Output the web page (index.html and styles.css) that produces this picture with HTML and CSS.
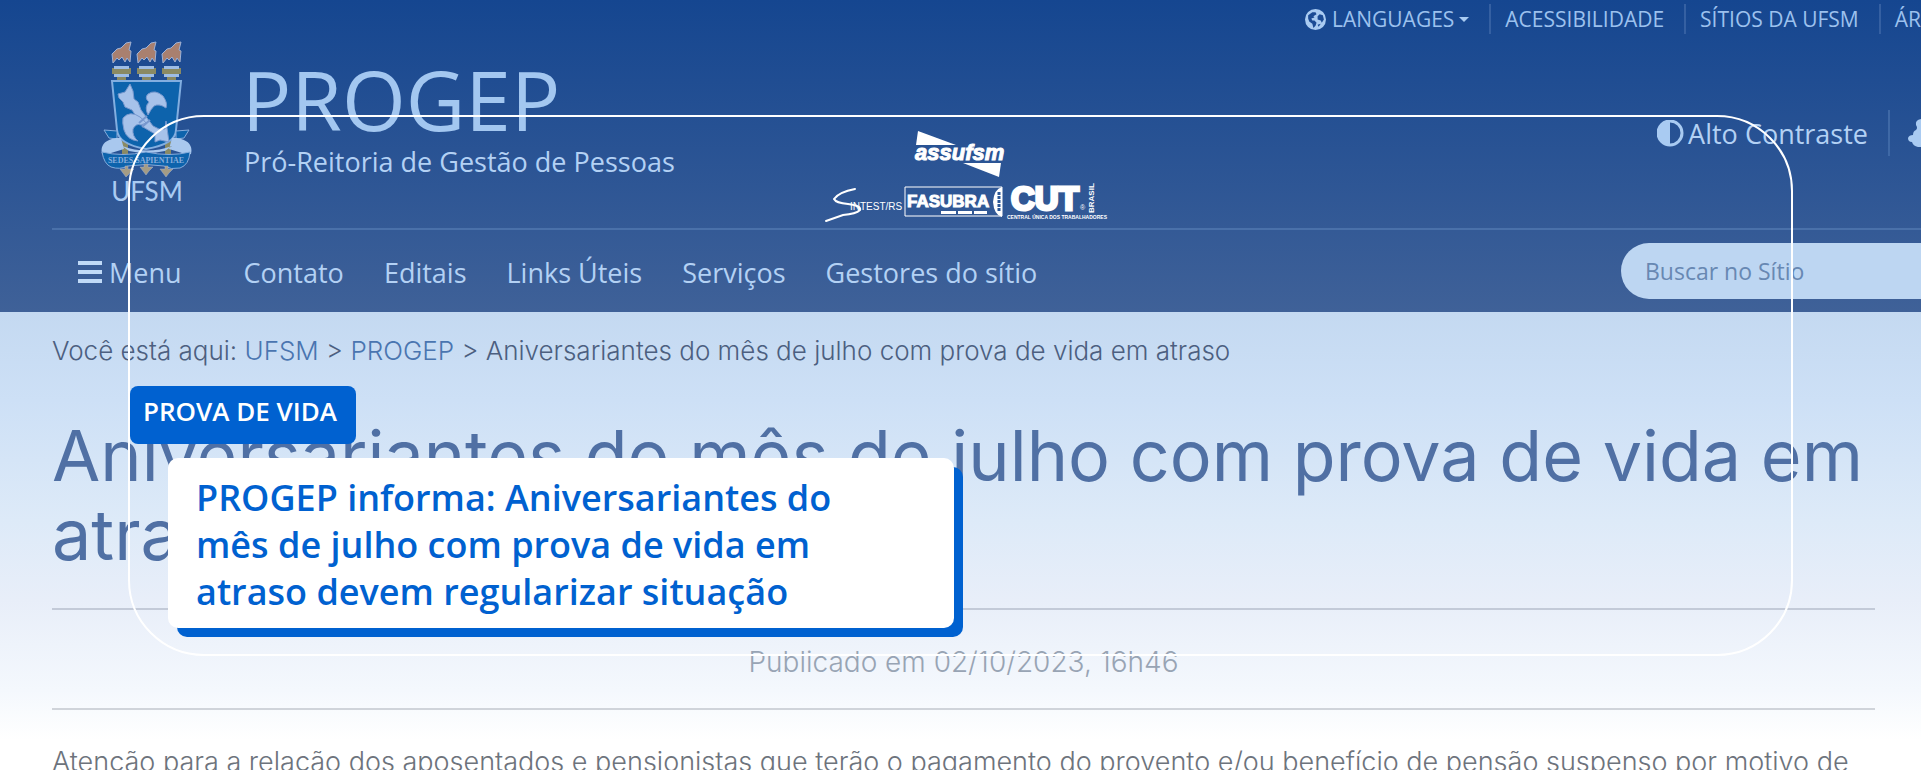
FILE: index.html
```html
<!DOCTYPE html>
<html lang="pt-BR">
<head>
<meta charset="utf-8">
<title>PROGEP – Prova de vida</title>
<link rel="stylesheet" href="styles.css">
</head>
<body>
<div class="page">
  <header class="header">
    <nav class="topbar" aria-label="Institucional">
      <button class="topbar-item languages" type="button">
        <svg class="globe" viewBox="0 0 20 20" aria-hidden="true"><circle cx="10" cy="10" r="10" fill="#a9cbf2"/><path fill="#1b4b95" d="M3 6l4-3 3 0 1 2-3 2 1 1-3 1 1 2 2 0 2 2-1 3-2 2-1-4-3-2-1-3zM14 5l3 1 1 4-2 3-1-2-3-1 0-3zM12 15l3-1-2 3z"/></svg>
        LANGUAGES <span class="caret"></span>
      </button>
      <a class="topbar-item" href="#">ACESSIBILIDADE</a>
      <a class="topbar-item" href="#">SÍTIOS DA UFSM</a>
      <a class="topbar-item topbar-last" href="#">ÁR</a>
    </nav>

    <div class="brand">
      <svg class="crest" viewBox="0 0 92 166" role="img" aria-label="UFSM">
        <g fill="#a9806f" stroke="#9fb2d6">
          <path d="M13 23l-1-9 5-5 4-1 5-5 5-1-2 8 2 1-1 11-3-4-2 4-3-5-3 3-2-2z"/>
          <path d="M38 23l-1-9 5-5 4-1 5-5 5-1-2 8 2 1-1 11-3-4-2 4-3-5-3 3-2-2z"/>
          <path d="M63 23l-1-9 5-5 4-1 5-5 5-1-2 8 2 1-1 11-3-4-2 4-3-5-3 3-2-2z"/>
        </g>
        <path fill="#8a8a63" d="M12 28h19v6h-5v7h-9v-7h-5zM37 28h19v6h-5v7h-9v-7h-5zM62 28h19v6h-5v7h-9v-7h-5zM22 100h6v14h-6zM65 100h6v14h-6z"/>
        <path fill="#9ebde5" d="M14 26h15v3H14zM39 26h15v3H39zM64 26h15v3H64zM14 34h15v3H14zM39 34h15v3H39zM64 34h15v3H64z"/>
        <path fill="#0d63ac" stroke="#82aee0" stroke-width="2" d="M12 41h69l-5 49q0 14-30 19Q18 104 17 90z"/>
        <g fill="#a7c2ea" stroke="#7898ce">
          <path d="M18 54l7-2 5-8 3 7 1 8 4 3 3 8 12 16 6 3 6 0 1-8 2 14 1 7-9-2-5 2 0-8-12-7-11-17-7-3-2-5-4-4z"/>
          <path d="M48 75q-4-8 1-13-5-4-1-8 7-5 15 2 5 7 3 12-7-5-12-2-3 3-6 9z"/>
          <path d="M41 85q-5-2-8 4-1 7 5 12-11-1-14-11-2-8-1-12 7-8 17-1 4 3 6 6z"/>
          <path fill="none" stroke-width="2" d="M39 83l8-7M42 87l8-7"/>
        </g>
        <path fill="#0d63ac" stroke="#86acdc" d="M4 90l13 1v8l-8-1zM89 90l-13 1v8l8-1z"/>
        <path fill="#a9c8ee" d="M2 114q-3-13 14-16h5l3 11-13 4-5 2zM91 114q3-13-14-16h-5l-3 11 13 4 5 2zM22 106q25 9 50 0l-7 5q-18 4-36 0z"/>
        <path fill="#0d63ac" stroke="#86acdc" d="M2 112q20 5 44 0 24 5 44 0-1 13-10 16-9 2-16-2-18-3-36 0-8 4-17 1Q4 124 2 112z"/>
        <text class="motto" x="46" y="123" text-anchor="middle">SEDES SAPIENTIAE</text>
        <path fill="#a49c85" stroke="#9fb2d6" stroke-width=".5" d="M20 129h5v-3h3v3h6l-4 4-4 4-3-4zM40 127h4v-3h4v3h5l-4 4-3 4-3-4zM60 129h5v-3h3v3h5l-4 4-3 4-3-4z"/>
        <text class="ufsm" x="47" y="161" text-anchor="middle">UFSM</text>
      </svg>
      <div class="brand-text">
        <a class="brand-name" href="#">PROGEP</a>
        <p class="brand-sub">Pró-Reitoria de Gestão de Pessoas</p>
      </div>
      <div class="tools">
        <button class="contrast" type="button">
          <svg class="contrast-icon" viewBox="0 0 27 27" aria-hidden="true"><circle cx="13" cy="13" r="12" fill="none" stroke="#a9cbf2" stroke-width="3"/><path fill="#a9cbf2" d="M13 1v25A12 12 0 0 1 13 1z"/></svg>
          Alto Contraste
        </button>
        <svg class="puzzle" viewBox="0 0 13 28" aria-hidden="true"><path fill="#a9cbf2" d="M13 0q-6 1-5 6 2 3 0 5-3 1-3 5-4 0-5 3 0 4 4 4 1 4 6 5h3z"/></svg>
      </div>
    </div>

    <div class="navrow">
      <nav class="mainnav" aria-label="Principal">
        <button class="menu" type="button"><span class="bars"></span>Menu</button>
        <a href="#">Contato</a>
        <a href="#">Editais</a>
        <a href="#">Links Úteis</a>
        <a href="#">Serviços</a>
        <a href="#">Gestores do sítio</a>
      </nav>
      <input class="search" type="search" placeholder="Buscar no Sítio" aria-label="Buscar no Sítio">
    </div>
  </header>

  <main class="content">
    <p class="crumbs">Você está aqui: <a href="#">UFSM</a> &gt; <a href="#">PROGEP</a> &gt; Aniversariantes do mês de julho com prova de vida em atraso</p>
    <h1 class="title">Aniversariantes do mês de julho com prova de vida em atraso</h1>
    <p class="published">Publicado em 02/10/2023, 16h46</p>
    <p class="lead">Atenção para a relação dos aposentados e pensionistas que terão o pagamento do provento e/ou benefício de pensão suspenso por motivo de</p>
  </main>

  <section class="overlay">
    <svg class="logos" viewBox="0 0 276 92" role="img" aria-label="assufsm, SINTEST/RS, FASUBRA, CUT Brasil">
      <g fill="#fff">
        <path d="M95 2l38 14H93zM140 34h38l-2 14z"/>
        <text class="assufsm" x="92" y="31">assufsm</text>
        <path fill="none" stroke="#fff" stroke-width="2" stroke-linecap="round" d="M32 60Q16 63 11 70q2 4 14 5 14 2 12 6-4 4-17 5L3 92"/>
        <text class="sintest" x="27" y="81">INTEST/RS</text>
        <path fill="none" stroke="#fff" d="M82 58h97v29H82z"/>
        <text class="fasubra" x="84" y="78">FASUBRA</text>
        <path d="M179 58v30q-8-2-9-15 1-13 9-15zM118 82h15v3h-15zM135 82h14v3h-14zM151 82h13v3h-13z"/>
        <path stroke="#2b5797" stroke-dasharray="3 1" stroke-width="3" d="M176 63v20"/>
        <text class="cut" x="188" y="81">CUT</text>
        <text class="reg" x="257" y="81">®</text>
        <text class="central" x="184" y="90">CENTRAL ÚNICA DOS TRABALHADORES</text>
        <text class="brasil" transform="translate(271 84) rotate(-90)">BRASIL</text>
      </g>
    </svg>
    <div class="callout">
      <span class="tag">PROVA DE VIDA</span>
      <h2 class="card">PROGEP informa: Aniversariantes do<br>mês de julho com prova de vida em<br>atraso devem regularizar situação</h2>
    </div>
  </section>
</div>
</body>
</html>
```
FILE: styles.css
```css
* { box-sizing: border-box; }
body {
  margin: 0;
  font-family: "Open Sans", "Noto Sans", sans-serif;
  font-size: 27px;
}
p, h1, h2 { margin: 0; }
a { color: inherit; text-decoration: none; }
button {
  margin: 0;
  padding: 0;
  border: 0;
  background: none;
  color: inherit;
  font: inherit;
}
.page {
  position: relative;
  height: 100vh;
  overflow: hidden;
  background: linear-gradient(#c4d9f1 312px, #cde0f6 400px, #ddeaf8 520px, #e8eef9 600px, #f4f8fd 690px, #fff 740px);
}
.header {
  background: linear-gradient(#154690, #3f6198);
  color: #b3d1f4;
}
.topbar {
  display: flex;
  justify-content: flex-end;
  height: 40px;
  padding-top: 4px;
  color: #9cc1ee;
  font-size: 21px;
}
.topbar-item {
  display: flex;
  align-items: center;
  height: 30px;
  padding: 0 20px 0 14px;
  border-right: 2px solid #3560a2;
  white-space: nowrap;
}
.topbar-last { padding-right: 0; border: 0; }
.globe { width: 21px; height: 21px; margin-right: 6px; }
.caret {
  margin-left: 5px;
  border: 5px solid transparent;
  border-top-color: #a9cbf2;
  border-bottom: 0;
}
.brand {
  display: flex;
  height: 190px;
  margin-left: 52px;
  padding-left: 48px;
  border-bottom: 2px solid #4a71aa;
}
.crest { width: 92px; height: 166px; }
.motto { font: bold 8px "Liberation Serif", serif; fill: #86acdc; }
.ufsm { font: 26px Lato, sans-serif; fill: #a9cbf2; }
.brand-text { flex: 1; padding-top: 11px; margin-left: 50px; }
.brand-name { display: block; font-size: 82px; line-height: 96px; color: #a3c7f0; }
.brand-sub { margin-left: 2px; line-height: 30px; }
.tools { display: flex; align-items: center; height: 46px; margin-top: 70px; gap: 18px; }
.contrast {
  display: flex;
  align-items: center;
  gap: 4px;
  height: 46px;
  padding-right: 20px;
  border-right: 2px solid #3f69a6;
}
.contrast-icon { width: 27px; height: 27px; }
.puzzle { width: 13px; height: 28px; }
.navrow {
  display: flex;
  align-items: center;
  justify-content: space-between;
  height: 82px;
  padding-left: 78px;
}
.mainnav { display: flex; align-items: center; gap: 40px; padding-top: 2px; }
.menu { display: flex; align-items: center; gap: 7px; margin-right: 22px; }
.bars {
  width: 24px;
  height: 22px;
  background: repeating-linear-gradient(#c0daf7 0 4px, transparent 4px 9px);
}
.search {
  width: 300px;
  height: 56px;
  padding: 0 24px;
  border: 0;
  border-radius: 28px 0 0 28px;
  background: #bdd6f2;
  font: 23px "Open Sans", sans-serif;
}
.search::placeholder { color: #6888b2; opacity: 1; }
.content {
  padding: 20px 46px 0 52px;
  font-family: Inter, "Open Sans", sans-serif;
  font-weight: 300;
}
.crumbs { font-size: 26px; line-height: 38px; color: #4c5f80; }
.crumbs a { color: #4a75b0; }
.title {
  margin-top: 46px;
  padding-bottom: 34px;
  border-bottom: 2px solid #c3cad8;
  color: #5070a4;
  font-size: 70px;
  font-weight: 400;
  line-height: 79px;
}
.published {
  padding: 34px 0 28px;
  border-bottom: 2px solid #d0d4da;
  color: #98a4b4;
  font-size: 28px;
  line-height: 36px;
  text-align: center;
}
.lead { margin-top: 32px; color: #6d737c; font-size: 27px; line-height: 40px; white-space: nowrap; }
.overlay {
  position: absolute;
  inset: 115px 128px;
  height: 541px;
  border: 2px solid #fff;
  border-radius: 76px;
}
.logos { display: block; width: 276px; height: 92px; margin: 12px auto 0; overflow: visible; }
.assufsm { font: italic bold 22px "Liberation Sans", sans-serif; stroke: #fff; }
.sintest { font: 10px "Liberation Sans", sans-serif; }
.fasubra { font: bold 17px "Liberation Sans", sans-serif; stroke: #fff; }
.cut { font: bold 33px "Liberation Sans", sans-serif; stroke: #fff; stroke-width: 3; }
.reg { font: 7px "Liberation Sans", sans-serif; }
.central { font: bold 5px "Liberation Sans", sans-serif; }
.brasil { font: bold 8px "Liberation Sans", sans-serif; }
.callout { display: flex; flex-direction: column; align-items: flex-start; margin-top: 165px; }
.tag {
  height: 58px;
  padding: 0 19px 0 13px;
  border-radius: 8px;
  background: #0061d0;
  color: #fff;
  font-size: 26px;
  font-weight: 600;
  line-height: 50px;
}
.card {
  width: 786px;
  margin: 14px 0 0 38px;
  padding: 16px 28px 13px;
  border-radius: 10px;
  background: #fff;
  box-shadow: 9px 9px 0 #0061d0;
  color: #0061d0;
  font-size: 36px;
  font-weight: 600;
  line-height: 47px;
}
```
